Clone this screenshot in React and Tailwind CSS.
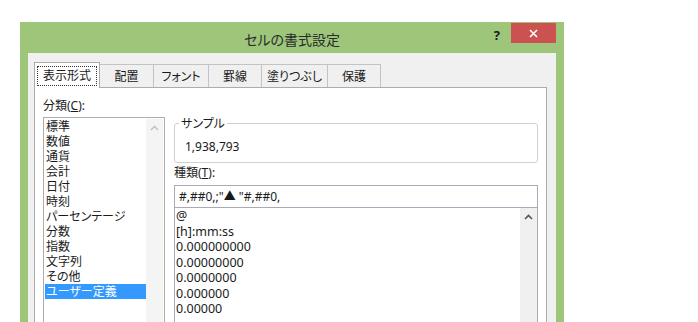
import React from 'react';

const categories = [
  '標準', '数値', '通貨', '会計', '日付', '時刻', 'パーセンテージ',
  '分数', '指数', '文字列', 'その他', 'ユーザー定義',
];

const formats = [
  '@', '[h]:mm:ss', '0.000000000', '0.00000000', '0.0000000', '0.000000', '0.00000',
];

const tabs = [
  { label: '配置', w: 'w-[54px]' },
  { label: 'フォント', w: 'w-[55px]' },
  { label: '罫線', w: 'w-[53px]' },
  { label: '塗りつぶし', w: 'w-[66px]' },
  { label: '保護', w: 'w-[53px]' },
];

function UpArrow({ color }) {
  return (
    <svg width="9" height="6" viewBox="0 0 9 6">
      <path d="M1 5 L4.5 1.5 L8 5" fill="none" stroke={color} strokeWidth="1.6" />
    </svg>
  );
}

export default function App() {
  return (
    <div className="w-[698px] h-[322px] overflow-hidden bg-white pl-[20px] pt-[22px] text-[#1a1a1a] font-['Noto_Sans','Noto_Sans_CJK_JP',sans-serif] [font-feature-settings:'palt']">
      {/* Window frame */}
      <div className="w-[544px] h-[320px] bg-[#9dc67b] flex flex-col px-[8px]">
        {/* Title bar */}
        <div className="relative h-[31px] flex items-center justify-center">
          <span className="text-[14px] leading-[14px] text-[#2b2b2b] mt-[4px]">セルの書式設定</span>
          <div className="absolute right-0 top-[1px] flex items-start">
            <span className="text-[13px] font-bold leading-[13px] mt-[6px] mr-[11px]">?</span>
            <div className="w-[45px] h-[20px] bg-[#cc5252] flex items-center justify-center">
              <svg width="9" height="9" viewBox="0 0 9 9">
                <path d="M1 1 L8 8 M8 1 L1 8" stroke="white" strokeWidth="1.6" />
              </svg>
            </div>
          </div>
        </div>

        {/* Client area */}
        <div className="flex-1 bg-[#f0f0f0] pt-[9px] pl-[6px] pr-[9px] flex flex-col">
          {/* Tabs */}
          <div className="relative z-10 flex items-end h-[25px] text-[12px]">
            <div className="w-[66px] h-[26px] -mb-px bg-white border border-b-0 border-[#acacac] flex items-center justify-center">
              <span className="border border-dotted border-[#333] px-[5px] leading-[18px]">表示形式</span>
            </div>
            {tabs.map((t) => (
              <div
                key={t.label}
                className={`${t.w} h-[23px] bg-[#f0f0f0] border-t border-r border-[#c3c3c3] flex items-center justify-center leading-[15px]`}
              >
                {t.label}
              </div>
            ))}
          </div>

          {/* Tab panel */}
          <div className="flex-1 bg-white border border-[#acacac] flex pl-[8px] text-[12px]">
            {/* Category column */}
            <div className="w-[122px] pt-[10px] flex flex-col">
              <div className="leading-[15px] h-[15px] mb-[4px]">
                分類(<span className="underline">C</span>):
              </div>
              <div className="flex-1 border border-[#adadad] flex p-px">
                <div className="flex-1 flex flex-col">
                  {categories.map((c, i) => (
                    <div
                      key={c}
                      className={`leading-[15px] h-[15px] pl-[1px] ${i === categories.length - 1 ? 'bg-[#3399ff] text-white' : ''}`}
                    >
                      {c}
                    </div>
                  ))}
                </div>
                <div className="w-[17px] bg-[#f4f4f4] flex justify-center pt-[6px]">
                  <UpArrow color="#c4c4c4" />
                </div>
              </div>
            </div>

            {/* Right column */}
            <div className="w-[364px] ml-[9px] pt-[35px] flex flex-col">
              <div className="relative h-[40px] border border-[#d0d0d0] rounded-[3px] flex items-center pl-[10px] pt-[6px]">
                <span className="absolute -top-[8px] left-[4px] bg-white px-[2px] leading-[15px]">サンプル</span>
                <span className="leading-[15px]">1,938,793</span>
              </div>
              <div className="mt-[2px] leading-[15px] h-[15px] mb-[5px]">
                種類(<span className="underline">T</span>):
              </div>
              <div className="h-[23px] border border-[#a9a9b9] flex items-center pl-[4px] leading-[15px]">
                #,##0,;"▲ "#,##0,
              </div>
              <div className="flex-1 border border-t-0 border-[#a9a9b9] flex">
                <div className="flex-1 flex flex-col pl-[1px] text-[12.5px]">
                  {formats.map((f) => (
                    <div key={f} className="leading-[15.5px] h-[15.5px]">{f}</div>
                  ))}
                </div>
                <div className="w-[17px] bg-[#f0f0f0] flex justify-center pt-[6px]">
                  <UpArrow color="#555" />
                </div>
              </div>
            </div>
          </div>
        </div>
      </div>
    </div>
  );
}
